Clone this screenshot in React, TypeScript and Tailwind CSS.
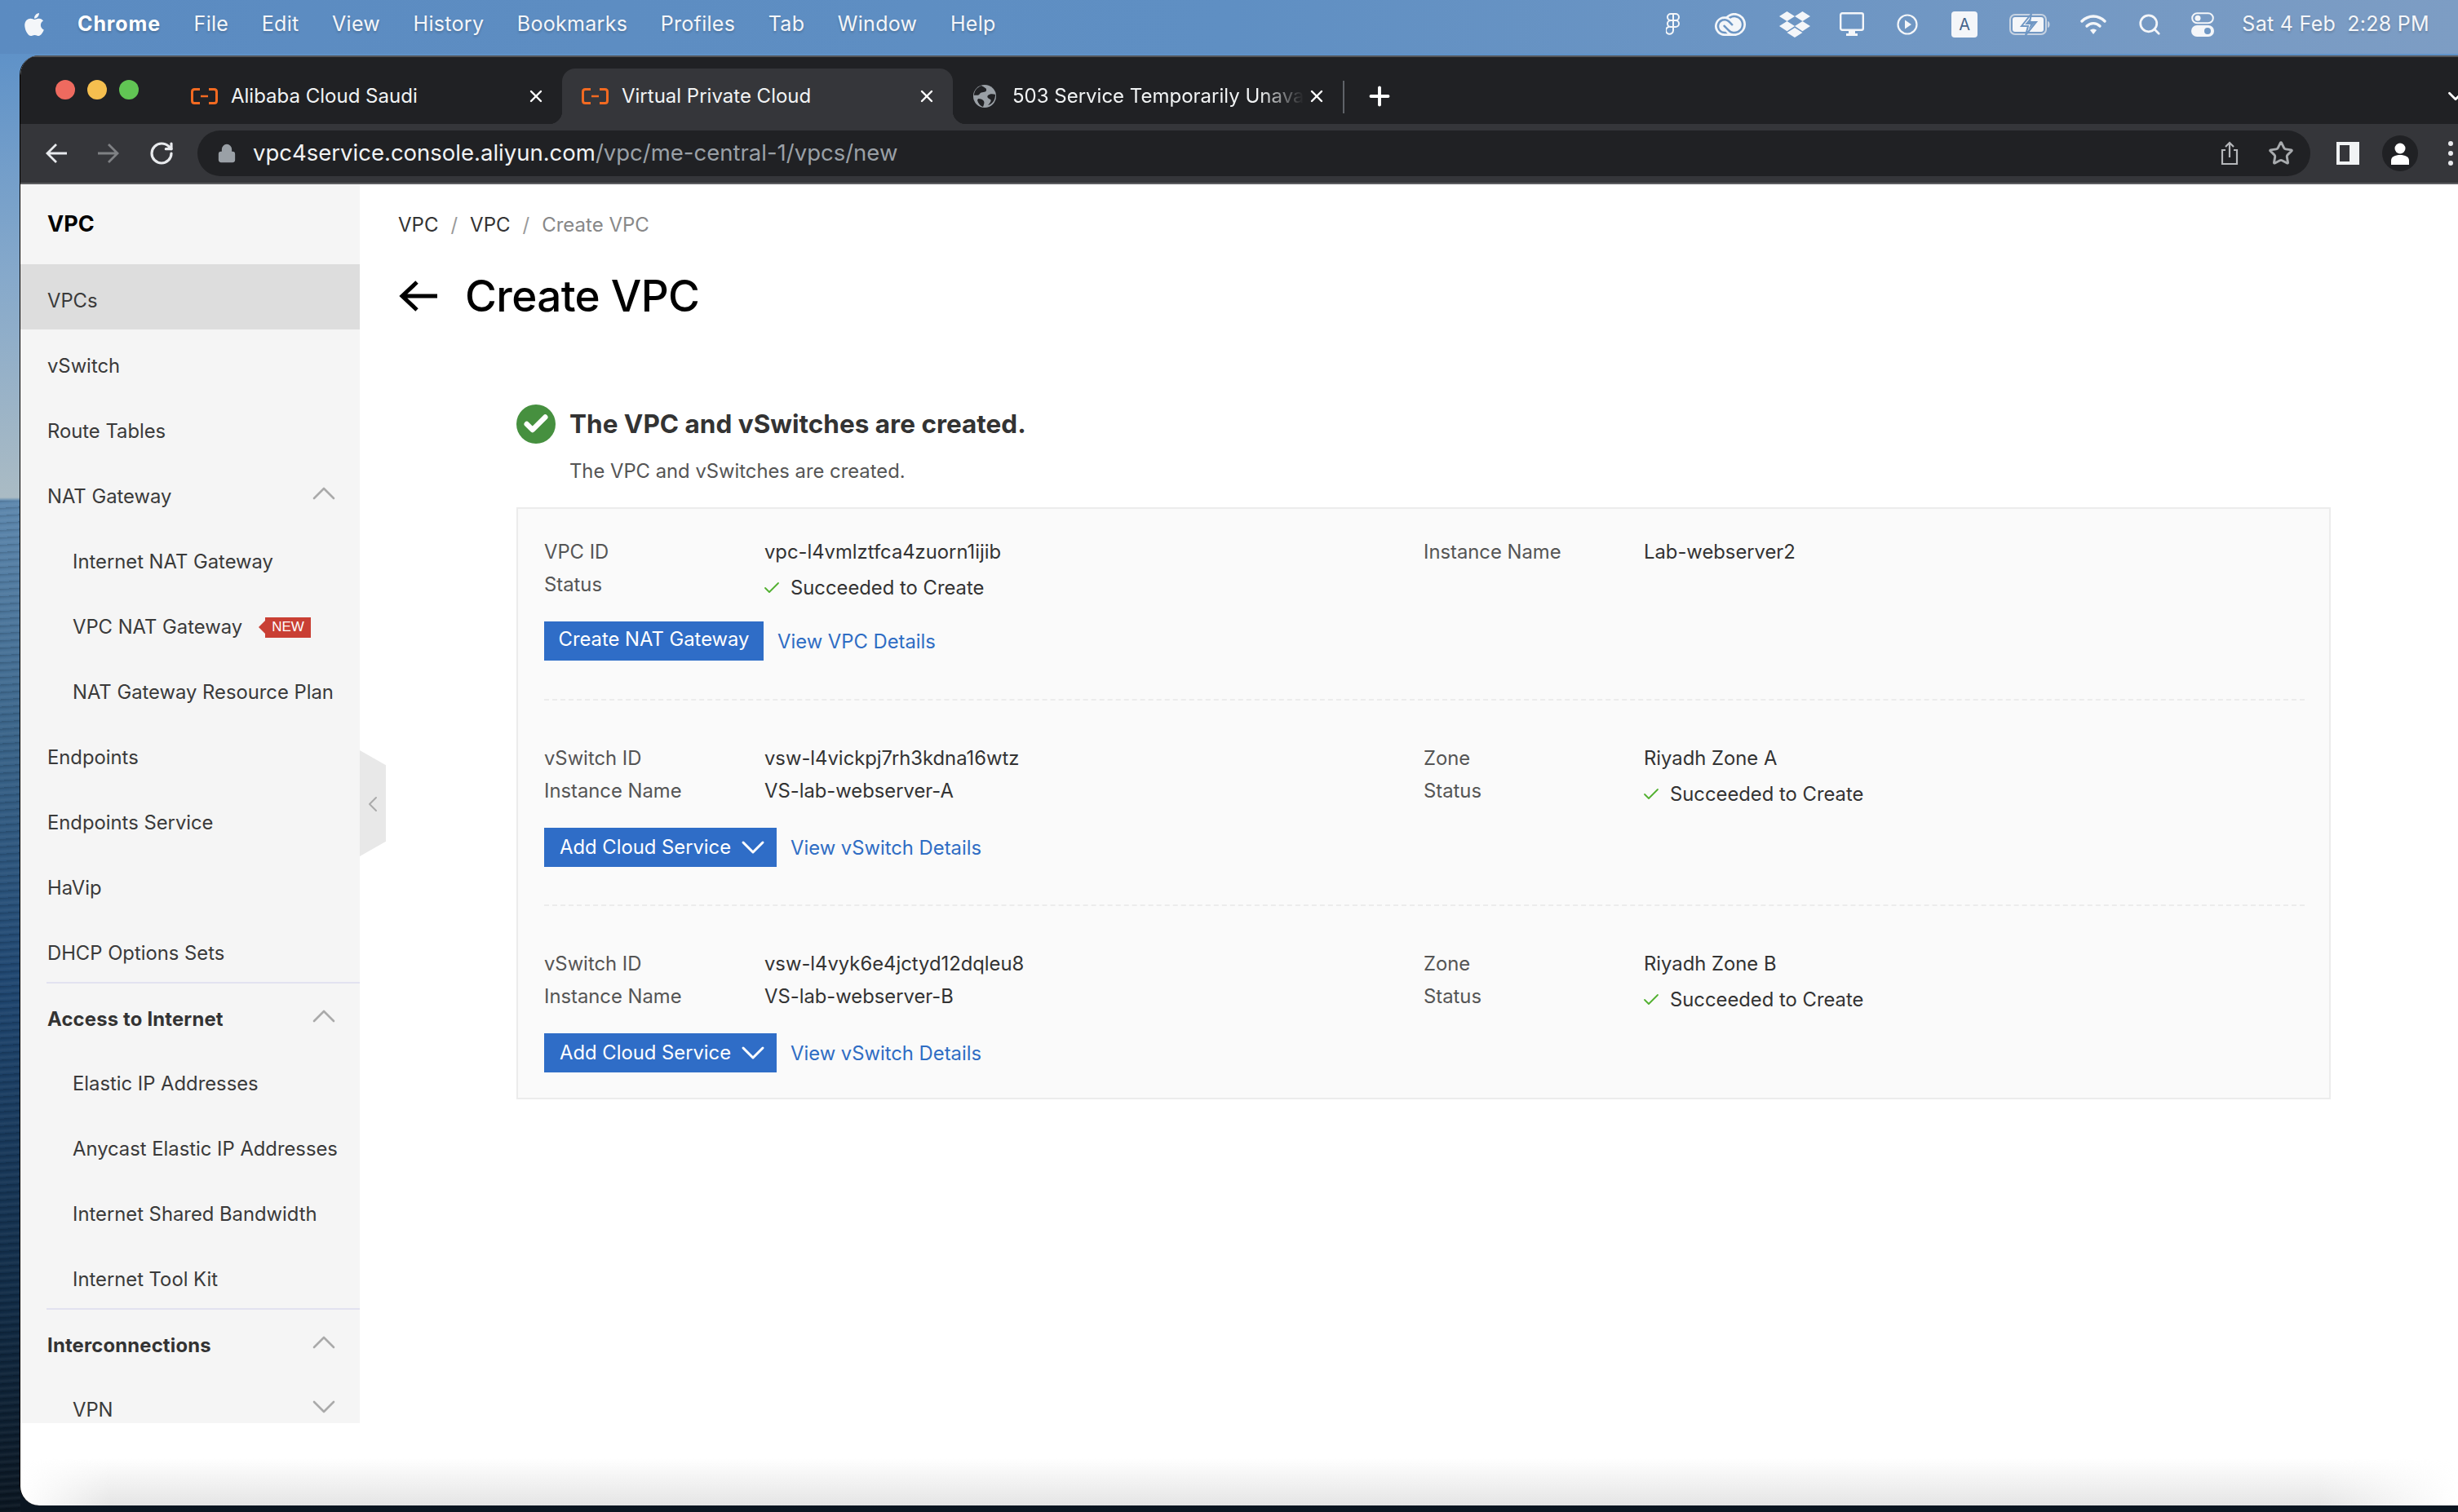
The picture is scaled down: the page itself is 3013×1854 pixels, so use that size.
import React from "react";
import { ChevronDown, ChevronUp, ChevronLeft, X, Plus, RotateCw, Star, Search, Check, Lock } from "lucide-react";
import { FaApple, FaDropbox } from "react-icons/fa";
import { SiAdobecreativecloud } from "react-icons/si";

const Figma = () => (
  <svg width="18" height="28" viewBox="0 0 18 28" fill="none" stroke="#f4f6f9" strokeWidth="2">
    <path d="M9 1H6a4 4 0 0 0 0 8h3zM9 1h3a4 4 0 0 1 0 8H9zM9 9H6a4 4 0 0 0 0 8h3zM9 9h3a4 4 0 0 1 0 8H9zM9 17H6a4.500 4.500 0 1 0 3 4.500z" />
  </svg>
);
const Monitor = () => (
  <svg width="30" height="30" viewBox="0 0 30 30" fill="none">
    <rect x="1.2" y="1.2" width="27.6" height="20.6" rx="2" stroke="#f4f6f9" strokeWidth="2.4" />
    <path d="M11 23h8v3h3v3H8v-3h3z" fill="#f4f6f9" />
  </svg>
);
const Play = () => (
  <svg width="26" height="26" viewBox="0 0 26 26" fill="none">
    <circle cx="13" cy="13" r="11.5" stroke="#f4f6f9" strokeWidth="2.2" />
    <path d="M10 7.5l8 5.5-8 5.5z" fill="#f4f6f9" />
  </svg>
);
const Battery = () => (
  <svg width="50" height="28" viewBox="0 0 50 28" fill="none">
    <rect x="1" y="2" width="44" height="24" rx="6" stroke="#c7d3e2" strokeWidth="2" />
    <rect x="4" y="5" width="38" height="18" rx="3" fill="#f4f6f9" />
    <path d="M47 10c2 .5 2.5 2 2.5 4s-.5 3.500-2.500 4z" fill="#c7d3e2" />
    <path d="M27 1L15 16h8l-3 11 13-16h-8z" fill="#f4f6f9" stroke="#6f97c4" strokeWidth="2" />
    <path d="M26 6l-7 8h7l-3 7 8-9h-7z" fill="#6f97c4" />
  </svg>
);
const Wifi = () => (
  <svg width="32" height="26" viewBox="0 0 32 26" fill="none" stroke="#f4f6f9" strokeWidth="3.400" strokeLinecap="round">
    <path d="M2 9c8-8 20-8 28 0" />
    <path d="M8 15c4.500-4.500 11.500-4.500 16 0" />
    <path d="M16 25l-4-5c2.200-2 5.800-2 8 0z" fill="#f4f6f9" stroke="none" />
  </svg>
);
const Control = () => (
  <svg width="28" height="30" viewBox="0 0 28 30" fill="none">
    <rect x="1.200" y="1.200" width="25.600" height="12" rx="6" stroke="#f4f6f9" strokeWidth="2" />
    <circle cx="8" cy="7.200" r="3.500" fill="#f4f6f9" />
    <rect x="0" y="16" width="28" height="14" rx="7" fill="#f4f6f9" />
    <circle cx="20" cy="23" r="4" fill="#6f97c4" />
  </svg>
);

const Ali = () => (
  <svg width="33" height="20" viewBox="0 0 33 20" fill="none" className="shrink-0">
    <path d="M11 1.500H4.500Q1.500 1.500 1.500 4.500v11q0 3 3 3H11M22 1.500h6.500q3 0 3 3v11q0 3-3 3H22" stroke="#f26a21" strokeWidth="3" />
    <path d="M12 10h9" stroke="#f26a21" strokeWidth="2.400" />
  </svg>
);
const Globe = () => (
  <svg width="28" height="28" viewBox="0 0 28 28" className="ml-[1px] mr-[4px] shrink-0">
    <circle cx="14" cy="14" r="14" fill="#9aa0a6" />
    <path d="M10 1c3 2 7 3 6 6s-6 1-8 4-5 1-7 2c0-6 4-10 9-12zM27 12c-3-1-7-1-9 1s1 4 3 5-1 5-3 7c5-1 9-6 9-13zM6 17c3 0 6 1 7 3s0 4-1 7c-3-1-6-4-7-8z" fill="#202124" />
  </svg>
);

function Tab({ icon, title, active, fade, w }: { icon: React.ReactNode; title: string; active?: boolean; fade?: boolean; w: string }) {
  return (
    <div className={`relative flex h-[68px] items-center pl-[24px] pr-[20px] ${w} ${active ? "rounded-t-[16px] bg-[#35363a]" : ""}`}>
      {active && (
        <>
          <div className="absolute bottom-0 left-[-16px] h-[16px] w-[16px] bg-[radial-gradient(circle_at_0_0,#202124_16px,#35363a_16.500px)]" />
          <div className="absolute bottom-0 right-[-16px] h-[16px] w-[16px] bg-[radial-gradient(circle_at_100%_0,#202124_16px,#35363a_16.500px)]" />
        </>
      )}
      {icon}
      <span className={`ml-[16px] flex-1 overflow-hidden whitespace-nowrap text-[24px] text-[#f1f3f4] ${fade ? "[mask-image:linear-gradient(90deg,black_84%,transparent_99%)]" : ""}`}>
        {title}
      </span>
      <X size={24} strokeWidth={2.4} className="shrink-0 text-white" />
    </div>
  );
}

function Row({ label, sub, bold, active, chevron, badge }: { label: string; sub?: boolean; bold?: boolean; active?: boolean; chevron?: "up" | "down"; badge?: boolean }) {
  return (
    <div className={`flex shrink-0 items-center pt-[10px] pr-[28px] text-[23.8px] ${bold ? "h-[78px] pl-[33px] font-bold tracking-[0.2px] text-[#333]" : "h-[80px] text-[#3a3a3a]"} ${sub ? "pl-[64px]" : bold ? "" : "pl-[33px]"} ${active ? "bg-[#dddddd]" : ""}`}>
      <span className="whitespace-nowrap">{label}</span>
      {badge && (
        <span className="ml-[20px] flex items-center">
          <span className="h-0 w-0 border-y-[8px] border-r-[8px] border-y-transparent border-r-[#c93f34]" />
          <span className="flex h-[25px] w-[56px] items-center justify-center bg-[#c93f34] text-[17px] font-normal tracking-normal text-white [font-family:'Liberation_Sans',sans-serif]">NEW</span>
        </span>
      )}
      {chevron === "up" && <ChevronUp size={48} strokeWidth={1.300} className="ml-auto mr-[-8px] mt-[-8px] text-[#aaaaaa]" />}
      {chevron === "down" && <ChevronDown size={48} strokeWidth={1.300} className="ml-auto mr-[-8px] mt-[-8px] text-[#aaaaaa]" />}
    </div>
  );
}

function Field({ label, value, ok }: { label: string; value: string; ok?: boolean }) {
  return (
    <div className="flex h-[40px] items-center text-[23.8px]">
      <span className="w-[270px] shrink-0 text-[#555]">{label}</span>
      {ok ? (
        <span className="mt-[8px] flex items-center text-[#333]">
          <Check size={24} strokeWidth={1.800} className="ml-[-3px] mr-[11px] text-[#52b030]" />
          {value}
        </span>
      ) : (
        <span className="text-[#333]">{value}</span>
      )}
    </div>
  );
}

function Section({ left, right, button, link, dropdown, cls }: { left: [string, string, boolean?][]; right: [string, string, boolean?][]; button: string; link: string; dropdown?: boolean; cls: string }) {
  return (
    <div className={cls}>
      <div className="flex">
        <div className="w-[1078px] shrink-0">
          {left.map(([l, v, ok]) => <Field key={l} label={l} value={v} ok={ok} />)}
        </div>
        <div>
          {right.map(([l, v, ok]) => <Field key={l} label={l} value={v} ok={ok} />)}
        </div>
      </div>
      <div className="mt-[25px] flex items-center text-[23.8px]">
        {dropdown ? (
          <div className="flex h-[48px] w-[285px] items-center bg-[#2f6dc7] pl-[19px] text-white">
            Add Cloud Service
            <ChevronDown size={48} strokeWidth={1.500} className="ml-[3px]" />
          </div>
        ) : (
          <div className="flex h-[48px] w-[269px] items-center justify-center bg-[#2f6dc7] pb-[4px] text-white">{button}</div>
        )}
        <span className="ml-[17px] mt-[3px] text-[#2f6dc4]">{link}</span>
      </div>
    </div>
  );
}

export default function App() {
  return (
    <div className="relative h-[1854px] w-[3013px] overflow-hidden bg-[linear-gradient(180deg,#5f92c8_66px,#86a9cb_340px,#aabbc4_610px,#5d87ad_614px,#3a6489_900px,#1f4670_1200px,#102a44_1600px,#0a1520_1854px)] [font-family:Inter,'Noto_Sans',sans-serif]">
      <div className="pointer-events-none absolute bottom-0 left-0 top-[614px] w-[25px] bg-[repeating-linear-gradient(176deg,rgba(0,0,0,0.14)_0px,transparent_3px,rgba(255,255,255,0.05)_6px,transparent_9px)]" />

      {/* Menu bar */}
      <div className="relative flex h-[66px] items-center bg-[linear-gradient(90deg,#5b8bc1,#5f8fc3_50%,#7d9dc4)] pb-[6px] text-[25px] tracking-[0.3px] text-white [text-shadow:0_2px_3px_rgba(0,0,0,0.2)]">
        <FaApple size={32} className="ml-[26px] text-[#f4f6f9]" />
        <div className="ml-[37px] flex gap-[40.5px]">
          <span className="font-bold tracking-[0.9px]">Chrome</span>
          {["File", "Edit", "View", "History", "Bookmarks", "Profiles", "Tab", "Window", "Help"].map((m) => (
            <span key={m} className="text-[#f4f6f9]">{m}</span>
          ))}
        </div>
        <div className="ml-auto flex items-center pr-[35px] text-[#f4f6f9]">
          <Figma />
          <span className="ml-[42px]"><SiAdobecreativecloud size={38} /></span>
          <span className="ml-[41px]"><FaDropbox size={38} /></span>
          <span className="ml-[36px]"><Monitor /></span>
          <span className="ml-[40px]"><Play /></span>
          <span className="ml-[41px] flex h-[32px] w-[32px] items-center justify-center rounded-[4px] bg-[#f4f6f9] text-[20px] text-[#44648c] [text-shadow:none]">A</span>
          <span className="ml-[39px]"><Battery /></span>
          <span className="ml-[37px]"><Wifi /></span>
          <Search size={30} strokeWidth={2.200} className="ml-[38px]" />
          <span className="ml-[36px]"><Control /></span>
          <span className="ml-[34px] whitespace-nowrap">Sat 4 Feb</span>
          <span className="ml-[14px] whitespace-nowrap">2:28 PM</span>
        </div>
      </div>

      {/* Browser window */}
      <div className="relative ml-[24px] mt-[2px] flex h-[1778px] flex-col overflow-hidden rounded-l-[24px] border-l-[1px] border-black bg-white">
        {/* Tab strip */}
        <div className="flex h-[84px] shrink-0 items-end border-t-[2px] border-[#54565a] bg-[#202124]">
          <div className="mb-[30px] ml-[43px] flex gap-[15px]">
            <span className="h-[24px] w-[24px] rounded-full bg-[#ee6a5f]" />
            <span className="h-[24px] w-[24px] rounded-full bg-[#f5bf4f]" />
            <span className="h-[24px] w-[24px] rounded-full bg-[#61c554]" />
          </div>
          <div className="ml-[40px] flex">
            <Tab icon={<Ali />} title="Alibaba Cloud Saudi" w="w-[479px]" />
            <Tab icon={<Ali />} title="Virtual Private Cloud" active w="w-[479px]" />
            <Tab icon={<Globe />} title="503 Service Temporarily Unavailable" fade w="w-[478px]" />
          </div>
          <div className="mb-[13px] h-[40px] w-[2px] bg-[#5f6368]" />
          <Plus size={36} strokeWidth={2.600} className="mb-[16px] ml-[25px] text-white" />
          <ChevronDown size={30} strokeWidth={2.200} className="mb-[19px] ml-auto mr-[-12px] text-white" />
        </div>

        {/* Toolbar */}
        <div className="flex h-[74px] shrink-0 items-center border-b-[2px] border-[#5c5d60] bg-[#35363a]">
          <svg width="26" height="26" viewBox="0 0 26 26" fill="none" stroke="#e8eaed" strokeWidth="2.800" className="ml-[31px]">
            <path d="M26 13H2M13 2L2 13l11 11" />
          </svg>
          <svg width="26" height="26" viewBox="0 0 26 26" fill="none" stroke="#7f8184" strokeWidth="2.800" className="ml-[38px]">
            <path d="M0 13h24M13 2l11 11-11 11" />
          </svg>
          <RotateCw size={32} strokeWidth={2.400} className="ml-[36px] text-[#e8eaed]" />
          <div className="ml-[28px] flex h-[56px] w-[2590px] items-center rounded-full bg-[#202124]">
            <Lock size={24} fill="#9aa0a6" strokeWidth={2.300} className="ml-[24px] text-[#9aa0a6]" />
            <span className="ml-[20px] whitespace-nowrap text-[27.5px] text-[#f1f3f4]">
              vpc4service.console.aliyun.com<span className="text-[#9aa0a6]">/vpc/me-central-1/vpcs/new</span>
            </span>
            <svg width="24" height="30" viewBox="0 0 24 30" fill="none" stroke="#b5b7ba" strokeWidth="2.200" className="ml-auto mr-[35px]">
              <path d="M7 11H3v17h18V11h-4M12 20V2M7 7l5-5 5 5" />
            </svg>
            <Star size={32} strokeWidth={2.200} className="mr-[20px] text-[#a8abae]" />
          </div>
          <svg width="28" height="28" viewBox="0 0 28 28" className="ml-[32px] shrink-0">
            <path fillRule="evenodd" d="M0 0h28v28H0zM4 4v20h12V4z" fill="#f1f3f4" />
          </svg>
          <div className="ml-[28px] flex h-[44px] w-[44px] shrink-0 items-center justify-center rounded-full bg-[#202124]">
            <svg width="24" height="28" viewBox="0 0 24 28" fill="#fff">
              <circle cx="12" cy="8" r="6.500" />
              <path d="M1 28v-5c0-5 5-7 11-7s11 2 11 7v5z" />
            </svg>
          </div>
          <div className="ml-[37px] flex flex-col gap-[6px]">
            <span className="h-[6px] w-[6px] rounded-full bg-[#e8eaed]" />
            <span className="h-[6px] w-[6px] rounded-full bg-[#e8eaed]" />
            <span className="h-[6px] w-[6px] rounded-full bg-[#e8eaed]" />
          </div>
        </div>

        {/* Content */}
        <div className="relative flex flex-1 items-start">
          <div className="flex h-[1519px] w-[416px] shrink-0 flex-col overflow-hidden bg-[#f5f5f5]">
            <div className="flex h-[98px] shrink-0 items-center pl-[33px] text-[27px] font-bold text-black">VPC</div>
            <Row label="VPCs" active />
            <Row label="vSwitch" />
            <Row label="Route Tables" />
            <Row label="NAT Gateway" chevron="up" />
            <Row label="Internet NAT Gateway" sub />
            <Row label="VPC NAT Gateway" sub badge />
            <Row label="NAT Gateway Resource Plan" sub />
            <Row label="Endpoints" />
            <Row label="Endpoints Service" />
            <Row label="HaVip" />
            <Row label="DHCP Options Sets" />
            <div className="ml-[32px] h-[2px] shrink-0 bg-[#e2e2f0]" />
            <Row label="Access to Internet" bold chevron="up" />
            <Row label="Elastic IP Addresses" sub />
            <Row label="Anycast Elastic IP Addresses" sub />
            <Row label="Internet Shared Bandwidth" sub />
            <Row label="Internet Tool Kit" sub />
            <div className="ml-[32px] h-[2px] shrink-0 bg-[#e2e2f0]" />
            <Row label="Interconnections" bold chevron="up" />
            <Row label="VPN" sub chevron="down" />
          </div>

          {/* collapse handle */}
          <div className="absolute left-[416px] top-[694px] flex h-[130px] w-[32px] items-center justify-center bg-[#e8e8e8] [clip-path:polygon(0_0,100%_14%,100%_86%,0_100%)]">
            <ChevronLeft size={36} strokeWidth={1.500} className="mt-[2px] text-[#aaaaaa]" />
          </div>

          <div className="flex-1 pl-[47px]">
            <div className="mt-[32px] flex items-center text-[24px] text-[#333]">
              <span>VPC</span>
              <span className="mx-[15px] text-[#999]">/</span>
              <span>VPC</span>
              <span className="mx-[15px] text-[#999]">/</span>
              <span className="text-[#888]">Create VPC</span>
            </div>
            <div className="mt-[35px] flex items-center">
              <svg width="48" height="40" viewBox="0 0 48 40" fill="none" stroke="#000" strokeWidth="5">
                <path d="M48 20H4M23 3L5 20l18 17" />
              </svg>
              <span className="ml-[34px] text-[53px] font-medium leading-[68px] tracking-[-0.6px] text-black">Create VPC</span>
            </div>

            <div className="ml-[145px] mt-[99px] w-[2224px]">
              <div className="flex items-center">
                <span className="flex h-[48px] w-[48px] items-center justify-center rounded-full bg-[#46903f]">
                  <Check size={34} strokeWidth={4.500} className="text-white" />
                </span>
                <span className="ml-[17px] text-[31.5px] font-bold text-[#333]">The VPC and vSwitches are created.</span>
              </div>
              <div className="ml-[65px] mt-[16px] text-[23.8px] text-[#555]">The VPC and vSwitches are created.</div>

              <div className="mt-[26px] h-[726px] border-2 border-[#ececec] bg-[#fafafa] pl-[32px] pr-[30px]">
                <Section
                  cls="h-[235px] border-b-2 border-dashed border-[#ececec] pt-[33px]"
                  left={[["VPC ID", "vpc-l4vmlztfca4zuorn1ijib"], ["Status", "Succeeded to Create", true]]}
                  right={[["Instance Name", "Lab-webserver2"]]}
                  button="Create NAT Gateway"
                  link="View VPC Details"
                />
                <Section
                  cls="h-[252px] border-b-2 border-dashed border-[#ececec] pt-[51px]"
                  dropdown
                  left={[["vSwitch ID", "vsw-l4vickpj7rh3kdna16wtz"], ["Instance Name", "VS-lab-webserver-A"]]}
                  right={[["Zone", "Riyadh Zone A"], ["Status", "Succeeded to Create", true]]}
                  button="Add Cloud Service"
                  link="View vSwitch Details"
                />
                <Section
                  cls="pt-[51px]"
                  dropdown
                  left={[["vSwitch ID", "vsw-l4vyk6e4jctyd12dqleu8"], ["Instance Name", "VS-lab-webserver-B"]]}
                  right={[["Zone", "Riyadh Zone B"], ["Status", "Succeeded to Create", true]]}
                  button="Add Cloud Service"
                  link="View vSwitch Details"
                />
              </div>
            </div>
          </div>
        </div>

        {/* bottom window shade */}
        <div className="pointer-events-none absolute bottom-0 left-0 right-0 h-[58px] bg-[linear-gradient(180deg,rgba(229,229,229,0),#e5e5e5)] [mask-image:linear-gradient(90deg,transparent,black_110px,black_calc(100%-170px),transparent)]" />
      </div>
    </div>
  );
}
